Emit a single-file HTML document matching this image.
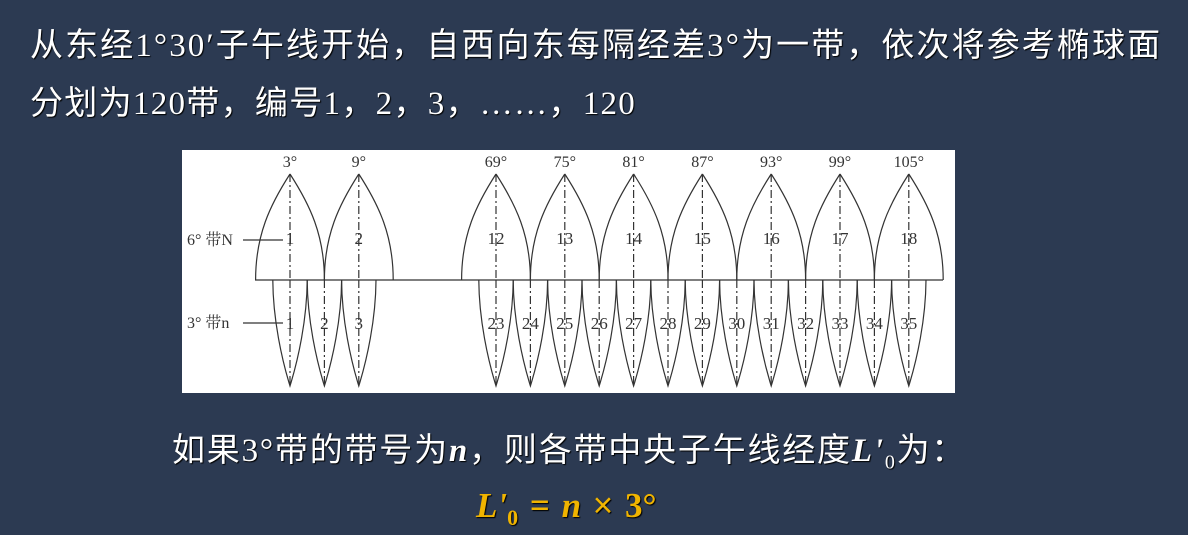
<!DOCTYPE html>
<html><head><meta charset="utf-8"><style>
body{margin:0;width:1188px;height:535px;background:#2c3a52;overflow:hidden;position:relative;font-family:"Liberation Serif","Noto Sans CJK SC",sans-serif;color:#fff}
.t{position:absolute;white-space:nowrap;font-size:33px;text-shadow:1px 1px 1px #000;font-family:"Liberation Serif","Noto Sans CJK SC",sans-serif}
.dia{position:absolute;left:182px;top:150px;width:773px;height:243px;background:#fff}
</style></head><body>
<div class="t" style="left:30px;top:18px;letter-spacing:2.1px">从东经1°30′子午线开始，自西向东每隔经差3°为一带，依次将参考椭球面</div>
<div class="t" style="left:30px;top:76px;letter-spacing:1.3px">分划为120带，编号1，2，3，……，120</div>
<div class="dia"></div>
<svg style="position:absolute;left:0;top:0" width="1188" height="535" id="s">
<g id="g" stroke="#333" stroke-width="1.2" fill="none" font-family="Liberation Serif,Noto Serif CJK SC,serif" font-size="16"></g>
</svg>
<div class="t" style="left:172px;top:423px;letter-spacing:1.8px">如果3°带的带号为<i><b>n</b></i>，则各带中央子午线经度<i><b>L'</b></i><sub style="font-size:20px">0</sub>为：</div>
<div class="t" style="left:476px;top:486px;color:#f0b400;font-family:'Liberation Serif',serif;font-weight:bold;font-size:35px;word-spacing:3px"><i>L'</i><sub style="font-size:22px">0</sub> = <i>n</i> <span style="font-weight:normal;font-family:'Liberation Sans',sans-serif">×</span> 3°</div>
<script>
var g=document.getElementById('g'),h='';
var c6=[[290,1,3],[358.8,2,9]];
for(var i=12;i<=18;i++)c6.push([496+(i-12)*68.8,i,6*i-3]);
c6.forEach(function(z){var c=z[0];
h+='<path d="M'+c+' 174 C'+(c-20)+' 205,'+(c-34.4)+' 235,'+(c-34.4)+' 280 M'+c+' 174 C'+(c+20)+' 205,'+(c+34.4)+' 235,'+(c+34.4)+' 280"/>';
h+='<line x1="'+c+'" y1="174" x2="'+c+'" y2="280" stroke-dasharray="8 3 2 3"/>';
h+='<text x="'+c+'" y="244" text-anchor="middle" fill="#333" stroke="none" font-size="17">'+z[1]+'</text>';
h+='<text x="'+c+'" y="167" text-anchor="middle" fill="#333" stroke="none">'+z[2]+'°</text>';});
var c3=[[290,1],[324.4,2],[358.8,3]];
for(var n=23;n<=35;n++)c3.push([496+(n-23)*34.4,n]);
c3.forEach(function(z){var c=z[0];
h+='<path d="M'+(c-17.2)+' 280 C'+(c-17)+' 320,'+(c-8)+' 360,'+c+' 386 C'+(c+8)+' 360,'+(c+17)+' 320,'+(c+17.2)+' 280"/>';
h+='<line x1="'+c+'" y1="280" x2="'+c+'" y2="386" stroke-dasharray="8 3 2 3"/>';
h+='<text x="'+c+'" y="329" text-anchor="middle" fill="#333" stroke="none" font-size="17">'+z[1]+'</text>';});
h+='<line x1="255" y1="280" x2="943" y2="280"/>';
h+='<text x="187" y="245" fill="#333" stroke="none">6°  带N</text><line x1="243" y1="240" x2="283" y2="240"/>';
h+='<text x="187" y="328" fill="#333" stroke="none">3°  带n</text><line x1="243" y1="323" x2="283" y2="323"/>';
g.innerHTML=h;
</script>
</body></html>
